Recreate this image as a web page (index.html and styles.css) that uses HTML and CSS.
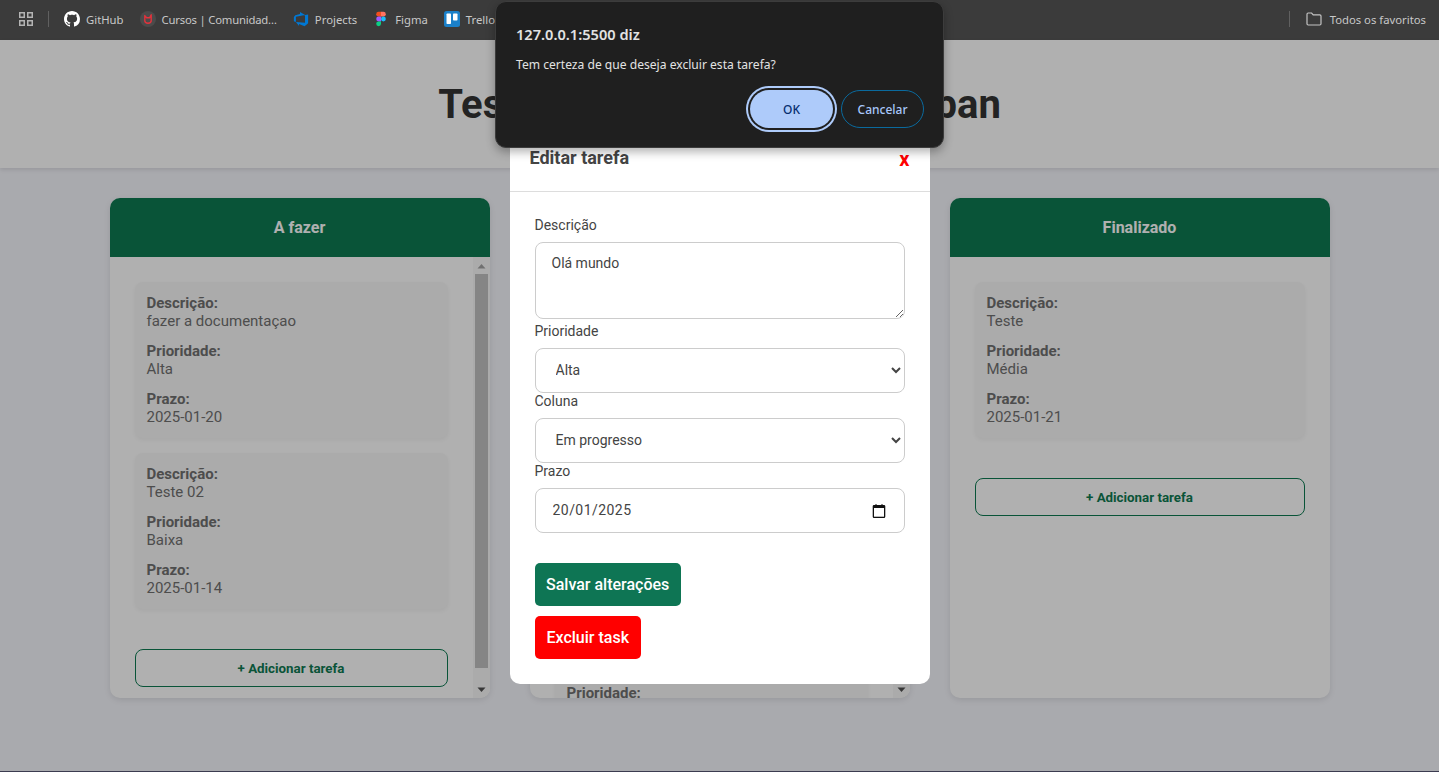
FILE: index.html
```html
<!DOCTYPE html>
<html lang="pt-BR">
<head>
    <meta charset="UTF-8">
    <meta name="viewport" content="width=device-width, initial-scale=1.0">
    <title>Quadro Kanban</title>
    <link rel="stylesheet" href="styles.css">
</head>
<body>
    <!-- browser bookmarks bar -->
    <nav class="bookmarks">
        <svg class="bm-apps" width="14" height="14" viewBox="0 0 14 14" fill="none" stroke="#b4b4b4" stroke-width="1.5">
            <rect x="0.75" y="0.75" width="4.5" height="4.5"/>
            <rect x="8.75" y="0.75" width="4.5" height="4.5"/>
            <rect x="0.75" y="8.75" width="4.5" height="4.5"/>
            <rect x="8.75" y="8.75" width="4.5" height="4.5"/>
        </svg>
        <span class="bm-sep"></span>
        <a class="bm-item">
            <svg width="16" height="16" viewBox="0 0 16 16" fill="#fff"><path d="M8 0C3.58 0 0 3.58 0 8c0 3.54 2.29 6.53 5.47 7.59.4.07.55-.17.55-.38 0-.19-.01-.82-.01-1.49-2.01.37-2.53-.49-2.69-.94-.09-.23-.48-.94-.82-1.13-.28-.15-.68-.52-.01-.53.63-.01 1.08.58 1.23.82.72 1.21 1.87.87 2.33.66.07-.52.28-.87.51-1.07-1.78-.2-3.64-.89-3.64-3.95 0-.87.31-1.59.82-2.15-.08-.2-.36-1.02.08-2.12 0 0 .67-.21 2.2.82.64-.18 1.32-.27 2-.27.68 0 1.36.09 2 .27 1.53-1.04 2.2-.82 2.2-.82.44 1.1.16 1.92.08 2.12.51.56.82 1.27.82 2.15 0 3.07-1.87 3.75-3.65 3.95.29.25.54.73.54 1.48 0 1.07-.01 1.93-.01 2.2 0 .21.15.46.55.38A8.013 8.013 0 0016 8c0-4.42-3.58-8-8-8z"/></svg>
            GitHub
        </a>
        <a class="bm-item bm-narrow">
            <svg width="16" height="16" viewBox="0 0 16 16">
                <circle cx="8" cy="8" r="8" fill="#4b4b4b"/>
                <path d="M4.8 4.6v5.2c0 1.6 1.2 2.4 3.2 2.4s3.2-.8 3.2-2.4V3.8l-1.6 3H6.6z" fill="none" stroke="#e2323c" stroke-width="1.4" stroke-linejoin="round"/>
            </svg>
            Cursos | Comunidad…
        </a>
        <a class="bm-item">
            <svg width="16" height="16" viewBox="0 0 18 18" fill="#0078d4"><path d="M17 4v9.74l-4 3.28-6.2-2.26V17L3.29 12.41l10.23.8V4.44zm-3.41.49L7.85 1v2.29L2.58 4.84 1 6.87v4.61l2.26 1V6.57z"/></svg>
            Projects
        </a>
        <a class="bm-item">
            <svg width="16" height="16" viewBox="-8 0 40 36" preserveAspectRatio="xMidYMid meet">
                <path d="M12 0H6a6 6 0 0 0 0 12h6z" fill="#f24e1e"/>
                <path d="M12 0h6a6 6 0 0 1 0 12h-6z" fill="#ff7262"/>
                <path d="M12 12H6a6 6 0 0 0 0 12h6z" fill="#a259ff"/>
                <circle cx="18" cy="18" r="6" fill="#1abcfe"/>
                <path d="M6 24h6v6a6 6 0 1 1-6-6z" fill="#0acf83"/>
            </svg>
            Figma
        </a>
        <a class="bm-item">
            <svg width="16" height="16" viewBox="0 0 16 16">
                <rect width="16" height="16" rx="2.5" fill="#1b80c9"/>
                <rect x="2.5" y="2.5" width="4.5" height="10.5" rx="0.8" fill="#fff"/>
                <rect x="9" y="2.5" width="4.5" height="7" rx="0.8" fill="#fff"/>
            </svg>
            Trello
        </a>
        <span class="bm-sep bm-sep-right"></span>
        <a class="bm-item bm-all">
            <svg width="16" height="14" viewBox="0 0 16 14" fill="none" stroke="#c4c4c4" stroke-width="1.2"><path d="M1 2.2c0-.7.5-1.2 1.2-1.2h3.4l1.6 1.8h6.6c.7 0 1.2.5 1.2 1.2v7.8c0 .7-.5 1.2-1.2 1.2H2.2c-.7 0-1.2-.5-1.2-1.2z"/></svg>
            Todos os favoritos
        </a>
    </nav>

    <div class="page">
        <header class="page-header">
            <h1>Teste Técnico - Quadro Kanban</h1>
        </header>

        <main class="board">
            <section class="column">
                <h2 class="column-title">A fazer</h2>
                <div class="column-body">
                    <div class="column-content">
                        <article class="task">
                            <p><strong>Descrição:</strong>fazer a documentaçao</p>
                            <p><strong>Prioridade:</strong>Alta</p>
                            <p><strong>Prazo:</strong>2025-01-20</p>
                        </article>
                        <article class="task">
                            <p><strong>Descrição:</strong>Teste 02</p>
                            <p><strong>Prioridade:</strong>Baixa</p>
                            <p><strong>Prazo:</strong>2025-01-14</p>
                        </article>
                        <button class="add-task">+ Adicionar tarefa</button>
                    </div>
                    <div class="scrollbar">
                        <svg class="scroll-arrow" width="17" height="17" viewBox="0 0 17 17"><path d="M8.5 7l4 4.5h-8z" fill="#a3a3a3"/></svg>
                        <div class="scroll-track"><div class="scroll-thumb"></div></div>
                        <svg class="scroll-arrow" width="17" height="17" viewBox="0 0 17 17"><path d="M4.5 6.5h8l-4 4.5z" fill="#505050"/></svg>
                    </div>
                </div>
            </section>

            <section class="column">
                <h2 class="column-title">Em progresso</h2>
                <div class="column-body">
                    <div class="column-content">
                        <article class="task">
                            <p><strong>Descrição:</strong>Olá mundo</p>
                            <p><strong>Prioridade:</strong>Alta</p>
                            <p><strong>Prazo:</strong>2025-01-20</p>
                        </article>
                        <article class="task">
                            <p><strong>Descrição:</strong>Teste</p>
                            <p><strong>Prioridade:</strong>Média</p>
                            <p><strong>Prazo:</strong>2025-01-18</p>
                        </article>
                        <article class="task">
                            <p><strong>Descrição:</strong>Teste</p>
                            <p><strong>Prioridade:</strong></p>
                        </article>
                    </div>
                    <div class="scrollbar">
                        <svg class="scroll-arrow" width="17" height="17" viewBox="0 0 17 17"><path d="M8.5 7l4 4.5h-8z" fill="#a3a3a3"/></svg>
                        <div class="scroll-track"><div class="scroll-thumb"></div></div>
                        <svg class="scroll-arrow" width="17" height="17" viewBox="0 0 17 17"><path d="M4.5 6.5h8l-4 4.5z" fill="#505050"/></svg>
                    </div>
                </div>
            </section>

            <section class="column">
                <h2 class="column-title">Finalizado</h2>
                <div class="column-body">
                    <div class="column-content">
                        <article class="task">
                            <p><strong>Descrição:</strong>Teste</p>
                            <p><strong>Prioridade:</strong>Média</p>
                            <p><strong>Prazo:</strong>2025-01-21</p>
                        </article>
                        <button class="add-task">+ Adicionar tarefa</button>
                    </div>
                </div>
            </section>
        </main>

        <!-- edit modal -->
        <div class="overlay">
            <div class="modal">
                <div class="modal-header">
                    <h3>Editar tarefa</h3>
                    <span class="modal-close">x</span>
                </div>
                <form class="modal-form">
                    <label for="desc">Descrição</label>
                    <textarea id="desc">Olá mundo</textarea>

                    <label for="prio">Prioridade</label>
                    <select id="prio">
                        <option>Alta</option>
                        <option>Média</option>
                        <option>Baixa</option>
                    </select>

                    <label for="col">Coluna</label>
                    <select id="col">
                        <option>Em progresso</option>
                        <option>A fazer</option>
                        <option>Finalizado</option>
                    </select>

                    <label for="prazo">Prazo</label>
                    <div class="date-field">
                        <input type="text" id="prazo" value="20/01/2025">
                        <svg width="14" height="14" viewBox="0 0 14 14" fill="none"><path d="M2 1h1.5V0h1v1h5V0h1v1H12c.8 0 1.3.6 1.3 1.3v10.2c0 .8-.5 1.5-1.3 1.5H2c-.8 0-1.3-.7-1.3-1.5V2.3C.7 1.6 1.2 1 2 1z" fill="#111"/><rect x="2" y="4" width="10" height="8.7" fill="#fff"/></svg>
                    </div>

                    <button type="button" class="btn btn-save">Salvar alterações</button>
                    <button type="button" class="btn btn-delete">Excluir task</button>
                </form>
            </div>
        </div>
    </div>

    <!-- browser confirm dialog -->
    <div class="confirm">
        <div class="confirm-title">127.0.0.1:5500 diz</div>
        <div class="confirm-text">Tem certeza de que deseja excluir esta tarefa?</div>
        <div class="confirm-actions">
            <button class="confirm-ok">OK</button>
            <button class="confirm-cancel">Cancelar</button>
        </div>
    </div>
</body>
</html>
```

FILE: styles.css
```css
* {
    box-sizing: border-box;
}
body {
    position: relative;
    display: flex;
    flex-direction: column;
    margin: 0;
    height: 772px;
    overflow: hidden;
    font-family: Roboto, Arial, sans-serif;
    background-color: #f5f6fc;
    color: #333;
}

/* bookmarks bar */
.bookmarks {
    display: flex;
    align-items: center;
    flex: 0 0 40px;
    padding-left: 19px;
    padding-bottom: 2px;
    background: #3b3b3b;
    font-family: "Noto Sans", sans-serif;
    font-size: 11.3px;
    color: #c8c8c8;
}
.bm-apps {
    flex: none;
}
.bm-sep {
    width: 1px;
    height: 16px;
    margin: 0 15px;
    background: #606060;
}
.bm-item {
    display: flex;
    align-items: center;
    gap: 6px;
    margin-right: 16px;
    white-space: nowrap;
}
.bm-narrow {
    letter-spacing: -0.2px;
}
.bm-sep-right {
    margin-left: auto;
    margin-right: 16px;
}
.bm-all {
    margin-right: 13px;
    gap: 8px;
}

/* page */
.page {
    position: relative;
    flex: 1;
    border-bottom: 1px solid #3b3b50;
}
.page-header {
    display: flex;
    align-items: center;
    justify-content: center;
    height: 128px;
    background: #fff;
    box-shadow: 0 2px 4px rgba(0, 0, 0, 0.1);
}
.page-header h1 {
    margin: 0;
    font-size: 40px;
    font-weight: 700;
}
.board {
    display: flex;
    justify-content: center;
    gap: 40px;
    padding-top: 30px;
}
.column {
    display: flex;
    flex-direction: column;
    width: 380px;
    height: 500px;
    border-radius: 10px;
    background: #fff;
    overflow: hidden;
    box-shadow: 0 2px 6px rgba(0, 0, 0, 0.1);
}
.column-title {
    flex: 0 0 59px;
    margin: 0;
    font-size: 16px;
    font-weight: 700;
    line-height: 59px;
    text-align: center;
    color: #fff;
    background: #0e7a52;
}
.column-body {
    display: flex;
    flex: 1;
    min-height: 0;
}
.column-content {
    flex: 1;
    min-width: 0;
    padding: 25px;
    overflow: hidden;
}

/* hand drawn scrollbar, the real one is hidden in the screenshot */
.scrollbar {
    display: flex;
    flex-direction: column;
    flex: 0 0 17px;
    background: #f8f8f8;
}
.scroll-arrow {
    display: block;
    flex: none;
}
.scroll-track {
    flex: 1;
    padding: 0 2px;
}
.scroll-thumb {
    height: 394px;
    background: #c1c1c1;
}

.task {
    margin-bottom: 15px;
    padding: 12px;
    border-radius: 8px;
    background: #f8f8f8;
    box-shadow: 0 2px 4px rgba(0, 0, 0, 0.05);
    font-size: 15px;
    line-height: 18px;
    color: #707070;
}
.task p {
    margin: 0 0 12px;
}
.task p:last-child {
    margin-bottom: 0;
}
.task strong {
    display: block;
    font-weight: 700;
}
.add-task {
    display: block;
    width: 100%;
    height: 38px;
    margin-top: 40px;
    border: 1px solid #0e7a52;
    border-radius: 8px;
    background: transparent;
    font-family: Roboto, Arial, sans-serif;
    font-size: 13.33px;
    font-weight: 700;
    color: #0e7a52;
}

/* modal */
.overlay {
    position: absolute;
    inset: 0;
    display: flex;
    justify-content: center;
    align-items: flex-end;
    padding-bottom: 87px;
    background: rgba(0, 0, 0, 0.31);
}
.modal {
    width: 420px;
    border-radius: 10px;
    background: #fff;
}
.modal-header {
    display: flex;
    justify-content: space-between;
    align-items: center;
    height: 66px;
    padding: 0 20px;
    border-bottom: 1px solid #ddd;
}
.modal-header h3 {
    margin: 0 0 3px;
    font-size: 18px;
    font-weight: 700;
    color: #444;
}
.modal-close {
    font-size: 20px;
    font-weight: 700;
    color: #f00;
}
.modal-form {
    padding: 25px;
}
.modal-form label {
    display: block;
    margin-bottom: 8px;
    font-size: 14px;
    line-height: 17px;
    color: #444;
}
.modal-form textarea,
.modal-form select,
.date-field {
    display: block;
    width: 370px;
    border: 1px solid #ccc;
    border-radius: 8px;
    background: #fff;
    font-family: Roboto, Arial, sans-serif;
    font-size: 14px;
    color: #444;
}
.modal-form textarea {
    height: 77px;
    margin-bottom: 4px;
    padding: 12px 16px;
}
.modal-form select {
    height: 45px;
    padding: 0 16px 2px;
}
.date-field {
    display: flex;
    align-items: center;
    justify-content: space-between;
    height: 45px;
    padding: 0 18px 0 17px;
}
.date-field input {
    width: 120px;
    margin-bottom: 2px;
    padding: 0;
    border: 0;
    outline: 0;
    font: inherit;
    letter-spacing: 0.45px;
    color: #444;
}
.btn {
    display: block;
    height: 43px;
    padding: 0 12px;
    border: 0;
    border-radius: 5px;
    font-family: Roboto, Arial, sans-serif;
    font-size: 16px;
    font-weight: 500;
    color: #fff;
}
.btn-save {
    margin-top: 30px;
    padding: 0 11.5px;
    background: #0e7554;
}
.btn-delete {
    margin-top: 10px;
    background: #f00;
}

/* confirm dialog */
.confirm {
    position: absolute;
    top: 1px;
    left: 495px;
    width: 449px;
    height: 147px;
    padding: 23px 19px 0 20px;
    border: 1px solid #3c3c3c;
    border-radius: 11px;
    background: #1f1f1f;
    box-shadow: 0 4px 10px rgba(0, 0, 0, 0.3);
    font-family: "Noto Sans", sans-serif;
    color: #e3e3e3;
}
.confirm-title {
    font-size: 14.6px;
    font-weight: 600;
    line-height: 18px;
}
.confirm-text {
    margin-top: 13px;
    font-size: 12.1px;
    line-height: 17px;
}
.confirm-actions {
    display: flex;
    justify-content: flex-end;
    gap: 8px;
    margin-top: 17px;
}
.confirm-actions button {
    width: 83px;
    height: 38px;
    border-radius: 19px;
    font-family: "Noto Sans", sans-serif;
    font-size: 12px;
    font-weight: 500;
}
.confirm-ok {
    border: 0;
    background: #aecbfa;
    color: #062e6f;
    box-shadow: 0 0 0 2px #1f1f1f, 0 0 0 4px #aecbfa;
}
.confirm-cancel {
    border: 1px solid #0a6a9e;
    background: transparent;
    color: #a8c7fa;
}
```
